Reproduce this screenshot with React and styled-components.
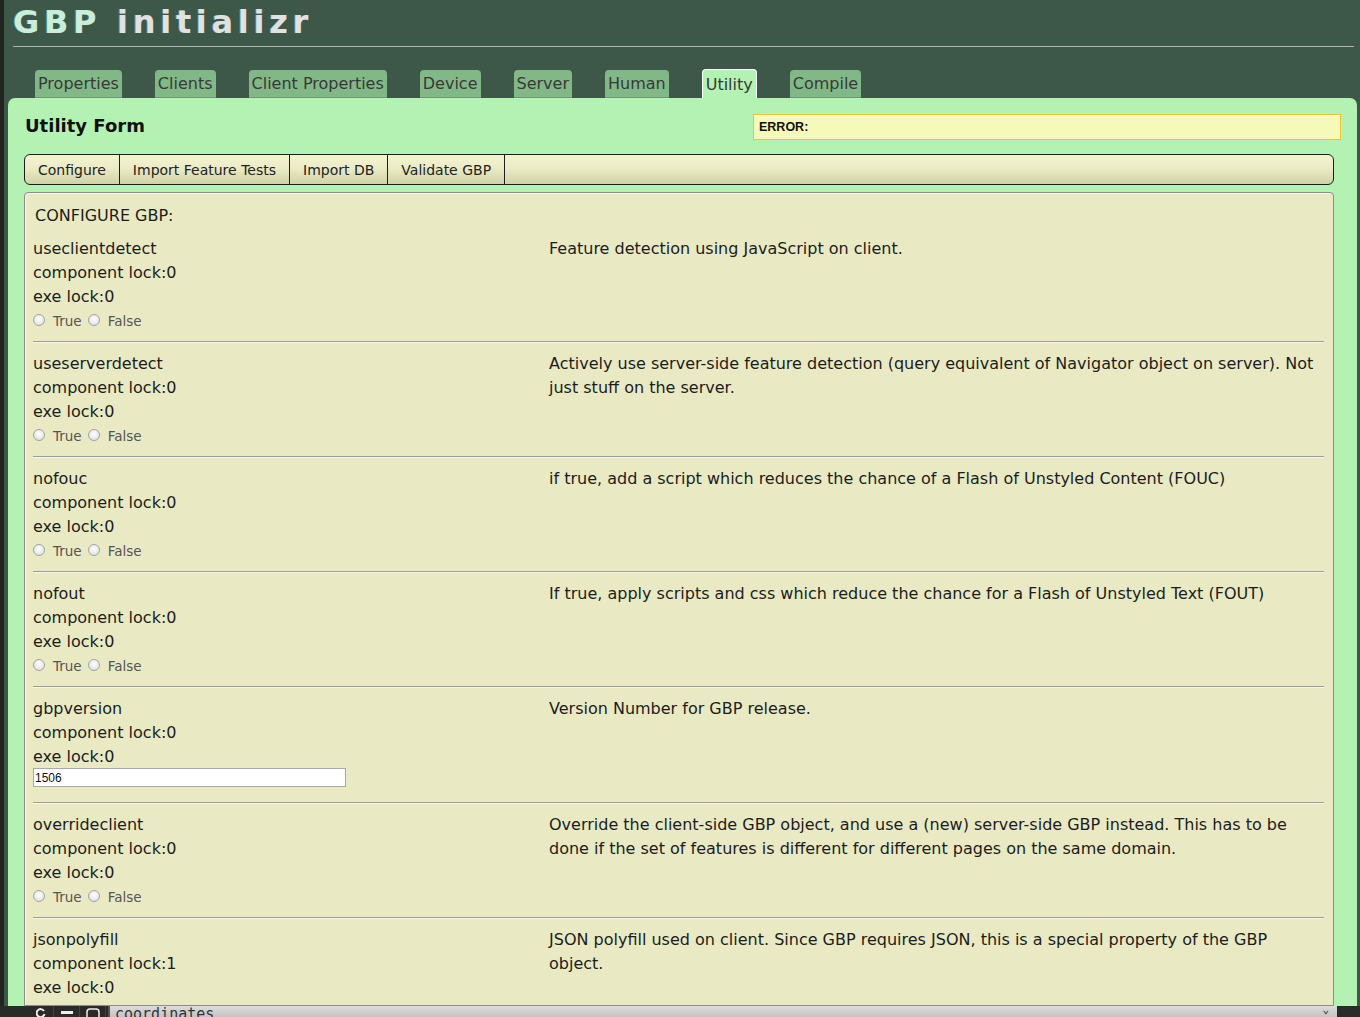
import React from 'react';
import styled, { createGlobalStyle } from 'styled-components';

const GlobalStyle = createGlobalStyle`
  html, body {
    margin: 0;
    padding: 0;
    background: #3d5749;
    overflow: hidden;
  }
  * {
    box-sizing: border-box;
  }
`;

const Screen = styled.div`
  width: 1360px;
  height: 1017px;
  display: flex;
  flex-direction: column;
  font-family: "DejaVu Sans", Verdana, sans-serif;
`;

const Page = styled.div`
  flex: 1;
  min-height: 0;
  display: flex;
  flex-direction: column;
  background: #3d5749;
  border-left: 4px solid #23231f;
  padding: 0 3px 0 4px;
`;

const Title = styled.h1`
  margin: 3px 0 0 5px;
  font-size: 32px;
  line-height: 38px;
  font-weight: bold;
  letter-spacing: 4.7px;
  color: #e1e1e1;
  text-shadow: -1px 0 0 rgba(120, 220, 220, 0.35);
`;

const TitleMark = styled.span`
  color: #c9eedb;
`;

const Rule = styled.div`
  margin: 5px 3px 0 5px;
  height: 1px;
  background: #b3b3b3;
`;

const Tabs = styled.div`
  display: flex;
  align-items: flex-end;
  gap: 33px;
  height: 29px;
  margin-top: 22px;
  padding-left: 27px;
`;

const Tab = styled.div`
  height: ${({ $active }) => ($active ? '29px' : '28px')};
  padding: 0 3px;
  padding-top: ${({ $active }) => ($active ? '1px' : '0')};
  font-size: 16px;
  line-height: 27px;
  color: #383838;
  background: ${({ $active }) => ($active ? '#b3f2b3' : '#82b887')};
  border: ${({ $active }) => ($active ? '1px solid #fff' : 'none')};
  border-bottom: ${({ $active }) => ($active ? 'none' : '1px solid #6b9a70')};
  border-radius: 4px 4px 0 0;
`;

const Panel = styled.div`
  flex: 1;
  min-height: 0;
  display: flex;
  flex-direction: column;
  background: #b3f2b3;
  border-radius: 7px 7px 0 0;
  padding: 16px 16px 0;
`;

const PanelHead = styled.div`
  display: flex;
  justify-content: space-between;
  align-items: center;
  height: 26px;
`;

const FormTitle = styled.h2`
  margin: 0 0 4px 1px;
  font-size: 18px;
  font-weight: bold;
  color: #111;
`;

const ErrorBox = styled.div`
  width: 588px;
  height: 26px;
  padding-left: 5px;
  background: #f6fab9;
  border: 1px solid #f3c22c;
  font-family: "Liberation Sans", Arial, sans-serif;
  font-size: 12.5px;
  font-weight: bold;
  line-height: 24px;
  color: #111;
`;

const ButtonBar = styled.div`
  display: flex;
  height: 31px;
  margin: 14px 7px 0 0;
  border: 1px solid #1e1e1e;
  border-radius: 6px;
  background: linear-gradient(#f4f4d4, #ebebc6 45%, #d2d2a7);
  overflow: hidden;
`;

const BarButton = styled.button`
  height: 29px;
  padding: 0 13px;
  border: none;
  border-right: 1px solid #1e1e1e;
  background: transparent;
  font-family: "DejaVu Sans", Verdana, sans-serif;
  font-size: 14px;
  color: #222;
`;

const Content = styled.div`
  flex: 1;
  min-height: 0;
  margin: 7px 7px 0 0;
  padding: 11px 9px 0 8px;
  background: #e9eac3;
  border: 1px solid #8c8c8c;
  border-radius: 4px 4px 0 0;
  box-shadow: inset 1px 1px 0 #f7f7e4;
  overflow: hidden;
`;

const SectionTitle = styled.div`
  padding-left: 2px;
  font-size: 16px;
  line-height: 23px;
  color: #1c1c1c;
`;

const Row = styled.div`
  display: grid;
  grid-template-columns: 516px 1fr;
  padding: 10px 0 8px;
  border-bottom: 1px solid #9c9c9c;
  box-shadow: 0 1px 0 #f6f6e2;
`;

const Line = styled.div`
  font-size: 16px;
  line-height: 24px;
  color: #1c1c1c;
  white-space: nowrap;
`;

const RadioLine = styled.div`
  display: flex;
  align-items: center;
  height: 24px;
  font-size: 13.5px;
  color: #555;
`;

const Radio = styled.input`
  appearance: none;
  width: 12px;
  height: 12px;
  margin: -2px 8px 0 0;
  border: 1px solid #a3a3a3;
  border-radius: 50%;
  background: radial-gradient(circle at 50% 40%, #ffffff, #d9d9d9);
`;

const RadioText = styled.span`
  margin-right: 6px;
`;

const InputLine = styled.div`
  display: flex;
  align-items: flex-start;
  height: 25px;
`;

const TextInput = styled.input`
  width: 313px;
  height: 19px;
  margin: -1px 0 0;
  padding: 0 1px;
  border: 1px solid #a9a9a9;
  background: #fff;
  font-family: "Liberation Sans", Arial, sans-serif;
  font-size: 12px;
  color: #111;
`;

const Description = styled.div`
  font-size: 16px;
  line-height: 24px;
  color: #1c1c1c;
`;

const StatusBar = styled.div`
  display: flex;
  height: 11px;
  overflow: hidden;
  background: #2b2b2b;
`;

const StatusTools = styled.div`
  display: flex;
  width: 108px;
  padding-left: 28px;
  background: #2a2a2a;
`;

const StatusTool = styled.div`
  display: flex;
  justify-content: center;
  width: 26px;
  padding-top: 2px;
  border-right: 1px solid #444;
`;

const StatusField = styled.div`
  display: flex;
  justify-content: space-between;
  width: 1229px;
  padding: 0 8px 0 5px;
  background: linear-gradient(#dcdcdc, #c4c4c4);
  border-left: 2px solid #555;
  font-family: "DejaVu Sans Mono", monospace;
  font-size: 15px;
  line-height: 16px;
  color: #333;
`;

const Chevron = styled.span`
  font-size: 11px;
  line-height: 8px;
  color: #222;
`;

const tabs = ['Properties', 'Clients', 'Client Properties', 'Device', 'Server', 'Human', 'Utility', 'Compile'];
const buttons = ['Configure', 'Import Feature Tests', 'Import DB', 'Validate GBP'];

const rows = [
  { name: 'useclientdetect', lock: 0, desc: 'Feature detection using JavaScript on client.' },
  { name: 'useserverdetect', lock: 0, desc: 'Actively use server-side feature detection (query equivalent of Navigator object on server). Not just stuff on the server.' },
  { name: 'nofouc', lock: 0, desc: 'if true, add a script which reduces the chance of a Flash of Unstyled Content (FOUC)' },
  { name: 'nofout', lock: 0, desc: 'If true, apply scripts and css which reduce the chance for a Flash of Unstyled Text (FOUT)' },
  { name: 'gbpversion', lock: 0, desc: 'Version Number for GBP release.', value: '1506' },
  { name: 'overrideclient', lock: 0, desc: 'Override the client-side GBP object, and use a (new) server-side GBP instead. This has to be done if the set of features is different for different pages on the same domain.' },
  { name: 'jsonpolyfill', lock: 1, desc: 'JSON polyfill used on client. Since GBP requires JSON, this is a special property of the GBP object.' },
  { name: 'geolocation', lock: 0, desc: 'Use the geolocation API on client.' },
];

const OptionRow = ({ row }) => (
  <Row>
    <div>
      <Line>{row.name}</Line>
      <Line>component lock:{row.lock}</Line>
      <Line>exe lock:0</Line>
      {row.value ? (
        <InputLine>
          <TextInput type="text" defaultValue={row.value} />
        </InputLine>
      ) : (
        <RadioLine>
          <Radio type="radio" name={row.name} />
          <RadioText>True</RadioText>
          <Radio type="radio" name={row.name} />
          <RadioText>False</RadioText>
        </RadioLine>
      )}
    </div>
    <Description>{row.desc}</Description>
  </Row>
);

const App = () => {
  return (
    <Screen>
      <GlobalStyle />
      <Page>
        <Title>
          <TitleMark>GBP</TitleMark> initializr
        </Title>
        <Rule />
        <Tabs>
          {tabs.map((t) => (
            <Tab key={t} $active={t === 'Utility'}>{t}</Tab>
          ))}
        </Tabs>
        <Panel>
          <PanelHead>
            <FormTitle>Utility Form</FormTitle>
            <ErrorBox>ERROR:</ErrorBox>
          </PanelHead>
          <ButtonBar>
            {buttons.map((b) => (
              <BarButton key={b}>{b}</BarButton>
            ))}
          </ButtonBar>
          <Content>
            <SectionTitle>CONFIGURE GBP:</SectionTitle>
            {rows.map((r) => (
              <OptionRow key={r.name} row={r} />
            ))}
          </Content>
        </Panel>
      </Page>
      <StatusBar>
        <StatusTools>
          <StatusTool>
            <svg width="10" height="10" viewBox="0 0 10 10">
              <path d="M8 3 A4 4 0 1 0 8.5 6" fill="none" stroke="#eee" strokeWidth="2" />
            </svg>
          </StatusTool>
          <StatusTool>
            <svg width="12" height="10" viewBox="0 0 12 10">
              <rect x="0" y="3" width="12" height="3" fill="#eee" />
            </svg>
          </StatusTool>
          <StatusTool>
            <svg width="14" height="10" viewBox="0 0 14 10">
              <rect x="1" y="1" width="12" height="12" rx="3" fill="none" stroke="#eee" strokeWidth="1.5" />
            </svg>
          </StatusTool>
        </StatusTools>
        <StatusField>
          <span>coordinates</span>
          <Chevron>⌄</Chevron>
        </StatusField>
      </StatusBar>
    </Screen>
  );
};

export default App;
